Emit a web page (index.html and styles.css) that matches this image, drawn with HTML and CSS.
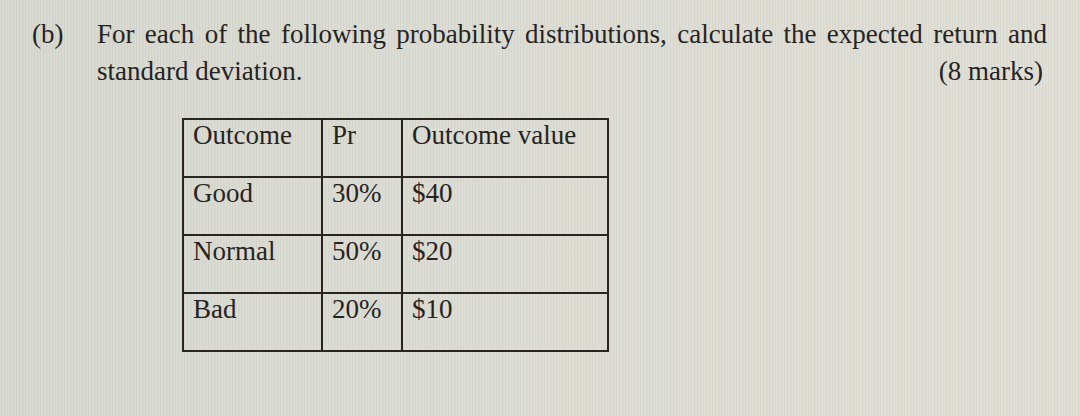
FILE: index.html
```html
<!DOCTYPE html>
<html lang="en">
<head>
<meta charset="utf-8">
<title>Question (b)</title>
<link rel="stylesheet" href="styles.css">
</head>
<body>
<main class="sheet">
  <section class="question">
    <span class="label">(b)</span>
    <div class="content">
      <p class="stem">
        <span class="line1">For each of the following probability distributions, calculate the expected return and</span>
        <span class="line2"><span>standard deviation.</span><span class="marks">(8 marks)</span></span>
      </p>
      <table class="dist">
        <tr><td class="c1">Outcome</td><td class="c2">Pr</td><td class="c3">Outcome value</td></tr>
        <tr><td>Good</td><td>30%</td><td>$40</td></tr>
        <tr><td>Normal</td><td>50%</td><td>$20</td></tr>
        <tr><td>Bad</td><td>20%</td><td>$10</td></tr>
      </table>
    </div>
  </section>
</main>
</body>
</html>
```
FILE: styles.css
```css
html, body {
  margin: 0;
  padding: 0;
}
body {
  width: 1080px;
  height: 416px;
  overflow: hidden;
  font-family: "Liberation Serif", "Times New Roman", serif;
  color: #27231f;
  background:
    repeating-linear-gradient(90deg, rgba(255,255,255,0.08) 0 1px, rgba(0,0,0,0.025) 1px 2px, rgba(255,255,255,0) 2px 3px),
    linear-gradient(90deg, #d6d7ce 0%, #dadbd2 40%, #dfded5 100%);
}
.sheet {
  padding: 16px 33px 0 32px;
}
.question {
  display: grid;
  grid-template-columns: 65px 950px;
}
.label {
  font-size: 27px;
  line-height: 37px;
}
.stem {
  margin: 0;
  font-size: 27px;
  line-height: 37px;
}
.line1 {
  display: block;
  text-align: justify;
  text-align-last: justify;
}
.line2 {
  display: flex;
  justify-content: space-between;
  padding-right: 4px;
}
.dist {
  margin: 28px 0 0 85px;
  border-collapse: collapse;
  border: 2px solid #2a2420;
  font-size: 27px;
}
.dist td {
  border: 2px solid #2a2420;
  height: 56px;
  padding: 0 10px 0 9px;
  vertical-align: top;
  line-height: 30px;
}
.dist .c1 { width: 118px; }
.dist .c2 { width: 59px; }
.dist .c3 { width: 185px; }
```
